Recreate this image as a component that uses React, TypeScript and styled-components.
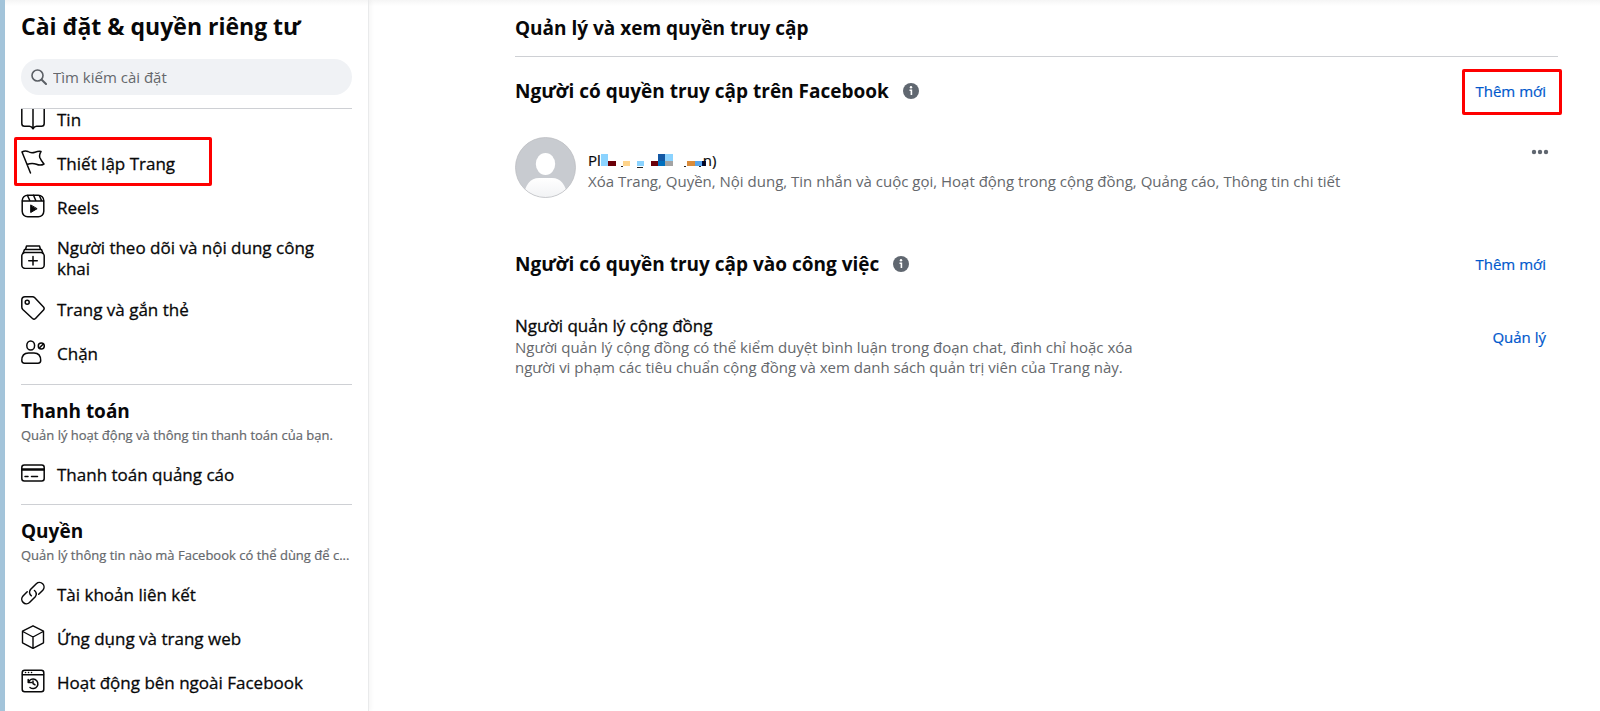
import React from 'react';
import styled, { createGlobalStyle, css } from 'styled-components';

const GlobalStyle = createGlobalStyle`
  * { box-sizing: border-box; }
  body {
    margin: 0;
    background: #fff;
    color: #080809;
    font-family: "Open Sans", "Noto Sans", sans-serif;
    font-size: 15px;
    line-height: 20px;
  }
  h1, h2, h3, p, ul { margin: 0; padding: 0; }
  ul { list-style: none; }
`;

const Page = styled.div`
  display: flex;
  min-height: 100vh;
  border-left: 5px solid #a3c4da;
  background: linear-gradient(#f5f5f5, #fff 6px);
`;

const Sidebar = styled.aside`
  display: flex;
  flex-direction: column;
  flex: 0 0 364px;
  min-width: 0;
  height: 100vh;
  padding: 12px 16px 0;
  border-right: 1px solid #e9eaeb;
  box-shadow: 2px 0 4px rgba(0, 0, 0, 0.04);
`;

const PageTitle = styled.h1`
  font-size: 23px;
  line-height: 28px;
  font-weight: 700;
  white-space: nowrap;
`;

const SearchBox = styled.label`
  display: flex;
  flex-shrink: 0;
  align-items: center;
  gap: 6px;
  height: 36px;
  margin: 19px 0 13px;
  padding: 0 10px;
  border-radius: 18px;
  background: #f0f2f5;
  color: #5b5f65;
`;

const SearchInput = styled.input`
  flex: 1;
  min-width: 0;
  padding: 0;
  border: 0;
  outline: 0;
  background: transparent;
  font: inherit;
  &::placeholder { color: #65686c; opacity: 1; }
`;

const ScrollArea = styled.nav`
  flex: 1;
  min-height: 0;
  margin: 0 -16px;
  padding: 0 16px;
  overflow: hidden;
`;

const Rule = styled.hr`
  flex-shrink: 0;
  width: 100%;
  height: 1px;
  margin: 0;
  border: 0;
  background: #ced0d4;
`;

const NavList = styled.ul<{ $scrolled?: boolean }>`
  margin-top: ${p => (p.$scrolled ? '-12px' : '0')};
  padding-bottom: ${p => (p.$scrolled ? '9px' : '8px')};
`;

const highlight = css`
  position: relative;
  &::after {
    content: "";
    position: absolute;
    border: 3px solid #fe0000;
    border-radius: 2px;
    pointer-events: none;
  }
`;

const mediumText = css`
  font-size: 17px;
  font-weight: 400;
  -webkit-text-stroke: 0.3px currentColor;
`;

const NavLink = styled.a<{ $marked?: boolean }>`
  display: flex;
  align-items: center;
  gap: 12px;
  min-height: 44px;
  padding: 8px 12px 8px 0;
  color: inherit;
  ${mediumText}
  line-height: 21px;
  text-decoration: none;
  svg { flex-shrink: 0; margin-bottom: 2px; }
  ${p => p.$marked && css`
    ${highlight}
    &::after { inset: -4px 140px -1px -7px; }
  `}
`;

const SectionTitle = styled.h2`
  margin-top: 14px;
  font-size: 19px;
  line-height: 24px;
  font-weight: 700;
`;

const SectionNote = styled.p`
  margin: 2px 0 7px;
  overflow: hidden;
  color: #65686c;
  font-size: 13px;
  line-height: 20px;
  -webkit-text-stroke: 0.2px currentColor;
  text-overflow: ellipsis;
  white-space: nowrap;
`;

const Main = styled.main`
  flex: 1;
  min-width: 0;
  padding: 16px 42px 0 146px;
`;

const Heading = styled.h2`
  font-size: 19px;
  line-height: 24px;
  font-weight: 700;
`;

const MainTitle = styled(Heading)`
  margin-bottom: 16px;
`;

const GroupHead = styled.div`
  display: flex;
  align-items: center;
  justify-content: space-between;
  height: 44px;
  margin-top: 12px;
`;

const HeadLabel = styled.div`
  display: flex;
  align-items: center;
  gap: 14px;
`;

const LinkButton = styled.button<{ $marked?: boolean }>`
  padding: 8px 12px;
  border: 0;
  background: none;
  color: #0058cc;
  font: inherit;
  -webkit-text-stroke: 0.2px currentColor;
  cursor: pointer;
  ${p => p.$marked && css`
    ${highlight}
    &::after { inset: -4px -4px -6px -1px; }
  `}
`;

const IconButton = styled.button`
  display: flex;
  padding: 5px 8px;
  border: 0;
  background: none;
  color: #606770;
  cursor: pointer;
`;

const Person = styled.div`
  display: flex;
  gap: 12px;
  margin: 24px 0 44px;
`;

const PersonText = styled.div`
  flex: 1;
  padding-top: 12px;
`;

const PersonName = styled.h3`
  display: flex;
  align-items: center;
  font-size: 15px;
  line-height: 22px;
  font-weight: 400;
  -webkit-text-stroke: 0.2px currentColor;
  svg { margin-right: -3px; }
`;

const Muted = styled.p`
  color: #65686c;
`;

const Role = styled.div`
  display: flex;
  align-items: flex-start;
  justify-content: space-between;
  margin-top: 28px;
`;

const RoleText = styled.div`
  max-width: 640px;
`;

const RoleAction = styled.div`
  padding-top: 5px;
`;

const RoleName = styled.h3`
  ${mediumText}
  line-height: 23px;
`;

const Icon = ({ children }: { children: React.ReactNode }) => (
  <svg width="24" height="24" viewBox="0 0 24 24" fill="none" stroke="currentColor" strokeWidth="1.5" strokeLinecap="round" strokeLinejoin="round" aria-hidden="true">
    {children}
  </svg>
);

const StoriesIcon = () => (
  <Icon><path d="M.8 0V17.5Q.8 20.3 3.5 20.3H8.5Q10.5 20.3 12 22.8Q13.5 20.3 15.5 20.3H20.5Q23.2 20.3 23.2 17.5V0M12 0V22" /></Icon>
);
const FlagIcon = () => (
  <Icon><path d="M9.500 23L1 2M1 2Q4 .5 7 1.500Q10 3.500 14 2.200Q17.500 1 20 1.500Q18 4.500 18.800 7.500Q20 10.500 23 14Q19.500 16 15.500 14.300Q11 12.500 6 14.500" /></Icon>
);
const ReelsIcon = () => (
  <Icon>
    <rect x="1.200" y="1.200" width="21.600" height="21.600" rx="5.500" />
    <path d="M1.500 7H22.500M6.500 1.500L9 7M12.500 1.200L15 7M18.500 2L20.500 6.500" />
    <path d="M9.700 11.300V18.500L15.800 14.900Z" fill="currentColor" strokeWidth="1" />
  </Icon>
);
const FollowersIcon = () => (
  <Icon><rect x=".8" y="7.500" width="22.400" height="16" rx="3.500" /><path d="M2 8.500L3.500 4.500H20.500L22 8.500M4.500 4.500L5.500 1H18.500L19.500 4.500M12 11.500V20M7.750 15.750H16.250" /></Icon>
);
const TagIcon = () => (
  <Icon><path d="M.8 4Q.8.8 4 .8H11.500Q12.800.8 13.800 1.800L22.500 11Q23.800 12.500 22.500 14L14.500 22.500Q13 23.800 11.500 22.500L1.800 13.500Q.8 12.500.8 11Z" /><circle cx="6.200" cy="6.200" r="2" /></Icon>
);
const BlockIcon = () => (
  <Icon><ellipse cx="9.700" cy="5.500" rx="3.900" ry="4.600" /><path d="M.8 20.500Q.8 13 7.500 13H13Q19.700 13 19.700 20.500Q19.700 23.200 17 23.200H3.500Q.8 23.200.8 20.500Z" /><circle cx="20.300" cy="6" r="3" /><path d="M18.300 8L22.300 4" /></Icon>
);
const CardIcon = () => (
  <Icon><rect x=".8" y="4" width="22.400" height="16" rx="2.500" /><path d="M1 8.500H23" strokeWidth="2.500" /><path d="M4 15.500H7M10.500 15.500H16.500" /></Icon>
);
const LinkIcon = () => (
  <Icon><path d="M10.300 14.800A4.700 4.700 0 0 1 9.500 8.500L15.300 2.700A4.600 4.600 0 0 1 21.800 9.200L17.700 13.300M13.500 9.500A4.700 4.700 0 0 1 14.300 15.700L8.500 21.500A4.600 4.600 0 0 1 2 15L6.200 10.800" /></Icon>
);
const BoxIcon = () => (
  <Icon><path d="M12 .8L22.500 6.200V17.800L12 23.400L1.500 17.800V6.200ZM1.800 6.500L12 12L22.200 6.500M12 12V23" strokeWidth="1.400" /></Icon>
);
const ActivityIcon = () => (
  <Icon>
    <rect x="1.200" y="1.200" width="21.600" height="21.600" rx="2.500" />
    <path d="M1.500 5.800H22.500M4.500 3.500H4.600M7.500 3.500H7.600M10.500 3.500H10.600" />
    <path d="M7.200 10.500V13.500H10.500M7.500 13.300A4.800 4.800 0 1 1 9 18.500M12 12V14.500L14 15.800" />
  </Icon>
);
const SearchIcon = () => (
  <svg width="16" height="16" viewBox="0 0 16 16" fill="none" stroke="currentColor" strokeWidth="1.600" strokeLinecap="round" aria-hidden="true">
    <circle cx="6.500" cy="6.500" r="5.500" /><path d="M10.700 10.700L15 15" strokeWidth="2" />
  </svg>
);
const InfoIcon = () => (
  <svg width="16" height="16" viewBox="0 0 16 16" role="img" aria-label="Thông tin">
    <circle cx="8" cy="8" r="8" fill="#606770" />
    <circle cx="8" cy="4.300" r="1.200" fill="#fff" />
    <path d="M6.500 7.200H8.400V12" fill="none" stroke="#fff" strokeWidth="1.600" />
  </svg>
);
const DotsIcon = () => (
  <svg width="20" height="20" viewBox="0 0 20 20" fill="currentColor" aria-hidden="true">
    <circle cx="4" cy="10" r="2.200" /><circle cx="10" cy="10" r="2.200" /><circle cx="16" cy="10" r="2.200" />
  </svg>
);
const Avatar = () => (
  <svg width="61" height="61" viewBox="0 0 61 61" role="img" aria-label="Ảnh đại diện">
    <defs>
      <clipPath id="round"><circle cx="30.500" cy="30.500" r="30" /></clipPath>
      <linearGradient id="body" x1="0" y1="0" x2="0" y2="1"><stop offset="0" stopColor="#fff" /><stop offset="1" stopColor="#f1f2f4" /></linearGradient>
    </defs>
    <g clipPath="url(#round)">
      <rect width="61" height="61" fill="#c8cbd0" />
      <ellipse cx="30.500" cy="27" rx="9.700" ry="11" fill="#fff" />
      <path d="M8 61Q11 41 24 41H37Q50 41 53 61Z" fill="url(#body)" />
    </g>
    <circle cx="30.500" cy="30.500" r="30" fill="none" stroke="#b9bbbf" strokeOpacity=".7" />
  </svg>
);
const Mosaic = () => (
  <svg width="105" height="16" viewBox="0 0 105 16" shapeRendering="crispEdges" aria-hidden="true">
    <path fill="#8bd3ff" d="M0 2h7v12H0zM36 9h7v5h-7zM64 2h8v7h-8z" />
    <path fill="#6b0008" d="M7 9h8v5H7zM50 9h7v5h-7z" />
    <path fill="#ffd48b" d="M22 9h7v5h-7z" />
    <path fill="#1358a4" d="M57 2h7v7h-7z" /><path fill="#006fbd" d="M57 9h7v5h-7z" />
    <path fill="#a3a3a3" d="M64 9h8v5h-8z" /><path fill="#d98c3c" d="M86 9h8v5h-8z" />
    <path fill="#56a5ec" d="M94 9h7v5h-7z" /><path fill="#000840" d="M101 9h4v5h-4z" />
    <path fill="#222" d="M20 14h2v1h-2zM36 15h6v1h-6zM83 14h2v1h-2zM98 14h2v1h-2z" />
  </svg>
);

const pageItems = [
  { label: 'Tin', icon: <StoriesIcon /> },
  { label: 'Thiết lập Trang', icon: <FlagIcon />, marked: true },
  { label: 'Reels', icon: <ReelsIcon /> },
  { label: 'Người theo dõi và nội dung công khai', icon: <FollowersIcon /> },
  { label: 'Trang và gắn thẻ', icon: <TagIcon /> },
  { label: 'Chặn', icon: <BlockIcon /> },
];
const paymentItems = [{ label: 'Thanh toán quảng cáo', icon: <CardIcon /> }];
const permissionItems = [
  { label: 'Tài khoản liên kết', icon: <LinkIcon /> },
  { label: 'Ứng dụng và trang web', icon: <BoxIcon /> },
  { label: 'Hoạt động bên ngoài Facebook', icon: <ActivityIcon /> },
];

type Item = { label: string; icon: React.ReactNode; marked?: boolean };

const Items = ({ items, scrolled }: { items: Item[]; scrolled?: boolean }) => (
  <NavList $scrolled={scrolled}>
    {items.map(item => (
      <li key={item.label}>
        <NavLink href="#" $marked={item.marked}>{item.icon}<span>{item.label}</span></NavLink>
      </li>
    ))}
  </NavList>
);

export default function App() {
  return (
    <>
      <GlobalStyle />
      <Page>
        <Sidebar>
          <PageTitle>Cài đặt &amp; quyền riêng tư</PageTitle>
          <SearchBox>
            <SearchIcon />
            <SearchInput type="search" placeholder="Tìm kiếm cài đặt" aria-label="Tìm kiếm cài đặt" />
          </SearchBox>
          <Rule />
          <ScrollArea>
            <Items items={pageItems} scrolled />
            <Rule />
            <SectionTitle>Thanh toán</SectionTitle>
            <SectionNote>Quản lý hoạt động và thông tin thanh toán của bạn.</SectionNote>
            <Items items={paymentItems} />
            <Rule />
            <SectionTitle>Quyền</SectionTitle>
            <SectionNote>Quản lý thông tin nào mà Facebook có thể dùng để c...</SectionNote>
            <Items items={permissionItems} />
          </ScrollArea>
        </Sidebar>
        <Main>
          <MainTitle>Quản lý và xem quyền truy cập</MainTitle>
          <Rule />
          <GroupHead>
            <HeadLabel><Heading>Người có quyền truy cập trên Facebook</Heading><InfoIcon /></HeadLabel>
            <LinkButton $marked>Thêm mới</LinkButton>
          </GroupHead>
          <Person>
            <Avatar />
            <PersonText>
              <PersonName>Pl<Mosaic />n)</PersonName>
              <Muted>Xóa Trang, Quyền, Nội dung, Tin nhắn và cuộc gọi, Hoạt động trong cộng đồng, Quảng cáo, Thông tin chi tiết</Muted>
            </PersonText>
            <div><IconButton aria-label="Tùy chọn khác"><DotsIcon /></IconButton></div>
          </Person>
          <GroupHead>
            <HeadLabel><Heading>Người có quyền truy cập vào công việc</Heading><InfoIcon /></HeadLabel>
            <LinkButton>Thêm mới</LinkButton>
          </GroupHead>
          <Role>
            <RoleText>
              <RoleName>Người quản lý cộng đồng</RoleName>
              <Muted>Người quản lý cộng đồng có thể kiểm duyệt bình luận trong đoạn chat, đình chỉ hoặc xóa người vi phạm các tiêu chuẩn cộng đồng và xem danh sách quản trị viên của Trang này.</Muted>
            </RoleText>
            <RoleAction><LinkButton>Quản lý</LinkButton></RoleAction>
          </Role>
        </Main>
      </Page>
    </>
  );
}
